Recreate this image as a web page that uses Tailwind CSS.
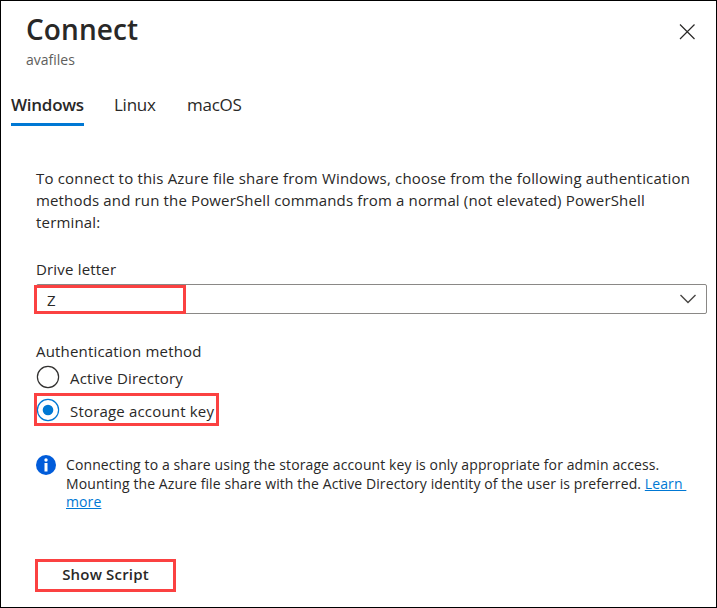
<!DOCTYPE html>
<html lang="en">
<head>
<meta charset="utf-8">
<title>Connect</title>
<script src="https://cdn.jsdelivr.net/npm/@tailwindcss/browser@4"></script>
</head>
<body class="bg-white">
<main class="flex h-[608px] w-[717px] flex-col border border-black bg-white font-['Open_Sans','Noto_Sans',sans-serif] text-[15px] leading-[22px] tracking-[0.180px] text-[#292827]">
  <header class="flex h-[71px] items-start justify-between pt-[10px] pr-[20px] pl-[25px]">
    <div>
      <h1 class="text-[28px] leading-[36px] font-semibold whitespace-nowrap tracking-[0.100px]">Connect</h1>
      <p class="mt-[3px] text-[14px] leading-[20px] tracking-[0px] whitespace-nowrap text-[#605e5c]">avafiles</p>
    </div>
    <button aria-label="Close" class="mt-[12px] h-[17px] w-[17px]">
      <svg viewBox="0 0 17 17" class="block h-[17px] w-[17px]" fill="none" stroke="#292827" stroke-width="1.2"><path d="M1 1.500 15.500 16M15.500 1.500 1 16"/></svg>
    </button>
  </header>
  <nav class="flex h-[54px] items-start gap-[30px] pt-[20px] pl-[10px] text-[17px] leading-[26px] tracking-[-0.260px] whitespace-nowrap">
    <a class="h-[34px] w-[73px] border-b-3 border-[#0078d4] font-semibold">Windows</a>
    <a class="w-[43px]">Linux</a>
    <a>macOS</a>
  </nav>
  <p class="mt-[41px] pl-[35px] whitespace-nowrap">To connect to this Azure file share from Windows, choose from the following authentication<br><span class="tracking-[0.150px]">methods and run the PowerShell commands from a normal (not elevated) PowerShell</span><br>terminal:</p>
  <label class="mt-[25px] pl-[35px]">Drive letter</label>
  <div class="relative mt-[4px] mr-[9px] ml-[35px] flex h-[30px] shrink-0 items-center justify-between rounded-[2px] border border-[#8a8886] pr-[10px] pl-[10px]">
    <span class="pt-[2px]">Z</span>
    <svg viewBox="0 0 16 10" class="h-[10px] w-[16px]" fill="none" stroke="#484644" stroke-width="1.4"><path d="M0.5 1 8 8.5 15.500 1"/></svg>
    <div class="absolute top-0 -left-[3px] h-[29px] w-[152px] border-3 border-[#fb4141]"></div>
  </div>
  <p class="mt-[26px] pl-[35px]">Authentication method</p>
  <div class="mt-[3px] flex h-[24px] items-center gap-[11px] pl-[36px]">
    <svg viewBox="0 0 24 24" class="-mr-px -ml-px h-[24px] w-[24px] shrink-0" fill="none"><circle cx="12" cy="12" r="10.600" stroke="#323130" stroke-width="1.200"/></svg>
    <span class="pt-[2px] whitespace-nowrap">Active Directory</span>
  </div>
  <div class="mt-[4px] ml-[33px] flex h-[33px] w-[185px] items-center gap-[11px] border-3 border-[#fb4141]">
    <svg viewBox="0 0 24 24" class="-mr-px -ml-px h-[24px] w-[24px] shrink-0" fill="none"><circle cx="12" cy="12" r="10.600" stroke="#0078d4" stroke-width="1.200"/><circle cx="12" cy="12" r="5.300" fill="#0078d4"/></svg>
    <span class="pt-[2px] whitespace-nowrap">Storage account key</span>
  </div>
  <div class="mt-[29px] flex items-start gap-[10px] pl-[35px] text-[14px] leading-[18.600px] tracking-[0.110px]">
    <svg viewBox="0 0 20 20" class="h-[20px] w-[20px] shrink-0"><circle cx="10" cy="10" r="10" fill="#015cda"/><circle cx="10" cy="5" r="1.700" fill="#fff"/><path d="M8.500 8h3v8.500h-3z" fill="#fff"/></svg>
    <p class="pt-[1px] whitespace-nowrap">Connecting to a share using the storage account key is only appropriate for admin access.<br><span class="tracking-[0.095px]">Mounting the Azure file share with the Active Directory identity of the user is preferred. </span><a class="text-[#0078d4] underline">Learn&nbsp;<br>more</a></p>
  </div>
  <button class="mt-[47px] ml-[34px] h-[33px] w-[141px] shrink-0 border-3 border-[#fb4141] pb-[2px] font-semibold">Show Script</button>
</main>
</body>
</html>
